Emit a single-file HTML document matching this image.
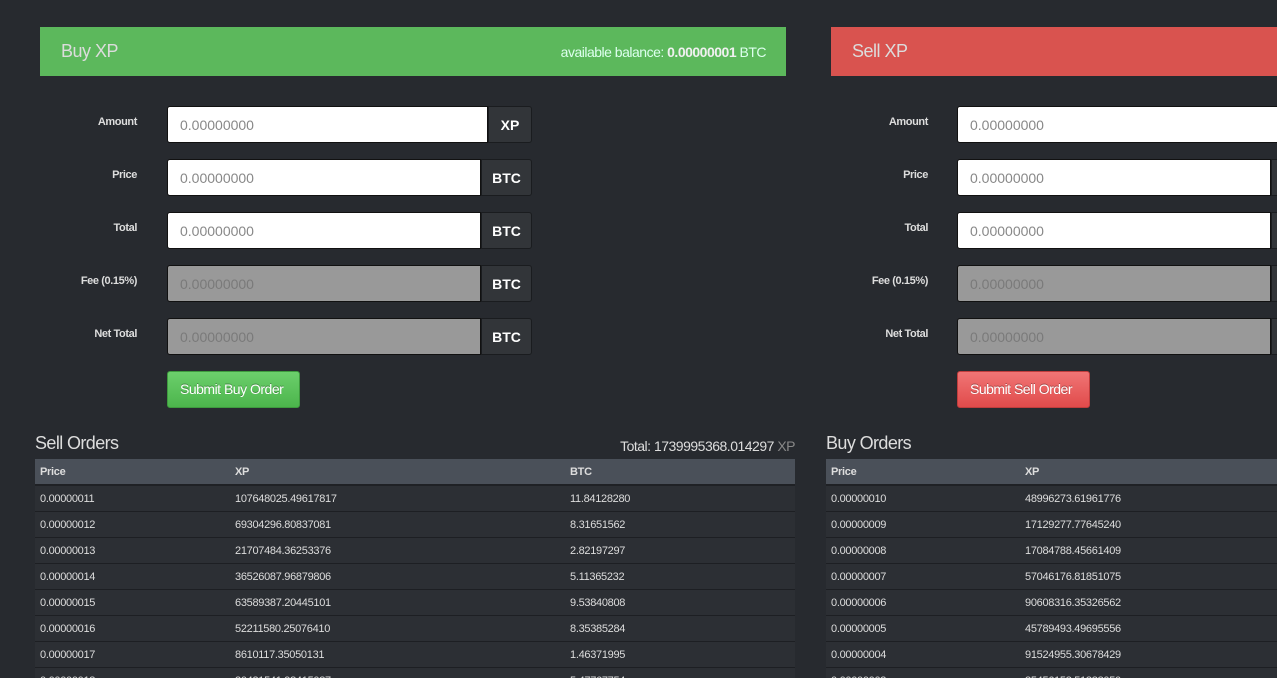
<!DOCTYPE html>
<html style="width:1277px;height:678px;overflow:hidden"><head><meta charset="utf-8"><style>
*{box-sizing:border-box;margin:0;padding:0}
body{width:1277px;height:678px;overflow:hidden;background:#272a2f;font-family:"Liberation Sans",sans-serif;position:relative;color:#ddd}
.a{position:absolute}
.hd{height:49px;top:27px;font-size:18px;color:#dcdcdc;padding:14px 21px;letter-spacing:-0.5px}
.lbl{font-size:11px;font-weight:bold;color:#ddd;text-align:right;width:120px;letter-spacing:-0.4px}
.inp{height:37px;background:#fff;border:1px solid #111;border-radius:3px 0 0 3px;font-size:14px;color:#888;padding:10px 12px}
.inp.d{background:#999;color:#7a7a7a}
.ad{height:37px;background:#323539;border:1px solid #1a1c1f;border-radius:0 3px 3px 0;font-size:14px;font-weight:bold;color:#fff;text-align:center;padding-top:10px}
.btn{height:37px;border-radius:3px;font-size:14px;color:#fff;padding:9px 12px;letter-spacing:-0.5px;text-shadow:0 -1px 0 rgba(0,0,0,.3)}
.ttl{font-size:18px;color:#ddd;letter-spacing:-0.6px}
table{position:absolute;border-collapse:collapse;font-size:11px;letter-spacing:-0.3px}
th{background:#4a5059;height:26px;text-align:left;padding-left:5px;padding-top:1px;font-weight:bold;color:#ddd;border-bottom:2px solid #1f2125}
td{background:#2c2f34;height:26px;padding-left:5px;padding-top:2px;color:#ddd;border-bottom:1px solid #1d1f23}
</style></head><body>
<div class="a hd" style="left:40px;width:746px;background:#5cb85c">Buy XP<span style="position:absolute;right:20px;top:17px;font-size:14px;color:#dfe;letter-spacing:-0.5px">available balance: <b style="color:#f0f0f0">0.00000001</b> BTC</span></div>
<div class="a hd" style="left:831px;width:446px;background:#d9534f">Sell XP</div>

<div class="a lbl" style="left:17px;top:116px">Amount</div>
<div class="a inp" style="left:167px;top:106px;width:321px">0.00000000</div><div class="a ad" style="left:488px;top:106px;width:44px">XP</div>
<div class="a lbl" style="left:17px;top:169px">Price</div>
<div class="a inp" style="left:167px;top:159px;width:314px">0.00000000</div><div class="a ad" style="left:481px;top:159px;width:51px">BTC</div>
<div class="a lbl" style="left:17px;top:222px">Total</div>
<div class="a inp" style="left:167px;top:212px;width:314px">0.00000000</div><div class="a ad" style="left:481px;top:212px;width:51px">BTC</div>
<div class="a lbl" style="left:17px;top:275px">Fee (0.15%)</div>
<div class="a inp d" style="left:167px;top:265px;width:314px">0.00000000</div><div class="a ad" style="left:481px;top:265px;width:51px">BTC</div>
<div class="a lbl" style="left:17px;top:328px">Net Total</div>
<div class="a inp d" style="left:167px;top:318px;width:314px">0.00000000</div><div class="a ad" style="left:481px;top:318px;width:51px">BTC</div>
<div class="a btn" style="left:167px;top:371px;width:133px;background:linear-gradient(#6ccf6c,#4cb54c);border:1px solid #3e9a3e">Submit Buy Order</div>

<div class="a lbl" style="left:808px;top:116px">Amount</div>
<div class="a inp" style="left:957px;top:106px;width:330px">0.00000000</div>
<div class="a lbl" style="left:808px;top:169px">Price</div>
<div class="a inp" style="left:957px;top:159px;width:314px">0.00000000</div><div class="a ad" style="left:1271px;top:159px;width:51px"></div>
<div class="a lbl" style="left:808px;top:222px">Total</div>
<div class="a inp" style="left:957px;top:212px;width:314px">0.00000000</div><div class="a ad" style="left:1271px;top:212px;width:51px"></div>
<div class="a lbl" style="left:808px;top:275px">Fee (0.15%)</div>
<div class="a inp d" style="left:957px;top:265px;width:314px">0.00000000</div><div class="a ad" style="left:1271px;top:265px;width:51px"></div>
<div class="a lbl" style="left:808px;top:328px">Net Total</div>
<div class="a inp d" style="left:957px;top:318px;width:314px">0.00000000</div><div class="a ad" style="left:1271px;top:318px;width:51px"></div>
<div class="a btn" style="left:957px;top:371px;width:133px;background:linear-gradient(#f07575,#e14b4b);border:1px solid #c03d3d">Submit Sell Order</div>

<div class="a ttl" style="left:35px;top:433px">Sell Orders</div>
<div class="a" style="right:482px;top:438px;font-size:14px;color:#ddd;letter-spacing:-0.5px">Total: 1739995368.014297 <span style="color:#888">XP</span></div>
<table style="left:35px;top:459px;width:760px">
<tr><th style="width:195px">Price</th><th style="width:335px">XP</th><th>BTC</th></tr>
<tr><td>0.00000011</td><td>107648025.49617817</td><td>11.84128280</td></tr>
<tr><td>0.00000012</td><td>69304296.80837081</td><td>8.31651562</td></tr>
<tr><td>0.00000013</td><td>21707484.36253376</td><td>2.82197297</td></tr>
<tr><td>0.00000014</td><td>36526087.96879806</td><td>5.11365232</td></tr>
<tr><td>0.00000015</td><td>63589387.20445101</td><td>9.53840808</td></tr>
<tr><td>0.00000016</td><td>52211580.25076410</td><td>8.35385284</td></tr>
<tr><td>0.00000017</td><td>8610117.35050131</td><td>1.46371995</td></tr>
<tr><td>0.00000018</td><td>30431541.98415087</td><td>5.47767754</td></tr>
</table>

<div class="a ttl" style="left:826px;top:433px">Buy Orders</div>
<table style="left:826px;top:459px;width:560px">
<tr><th style="width:194px">Price</th><th>XP</th></tr>
<tr><td>0.00000010</td><td>48996273.61961776</td></tr>
<tr><td>0.00000009</td><td>17129277.77645240</td></tr>
<tr><td>0.00000008</td><td>17084788.45661409</td></tr>
<tr><td>0.00000007</td><td>57046176.81851075</td></tr>
<tr><td>0.00000006</td><td>90608316.35326562</td></tr>
<tr><td>0.00000005</td><td>45789493.49695556</td></tr>
<tr><td>0.00000004</td><td>91524955.30678429</td></tr>
<tr><td>0.00000003</td><td>85456158.51888050</td></tr>
</table>
</body></html>
